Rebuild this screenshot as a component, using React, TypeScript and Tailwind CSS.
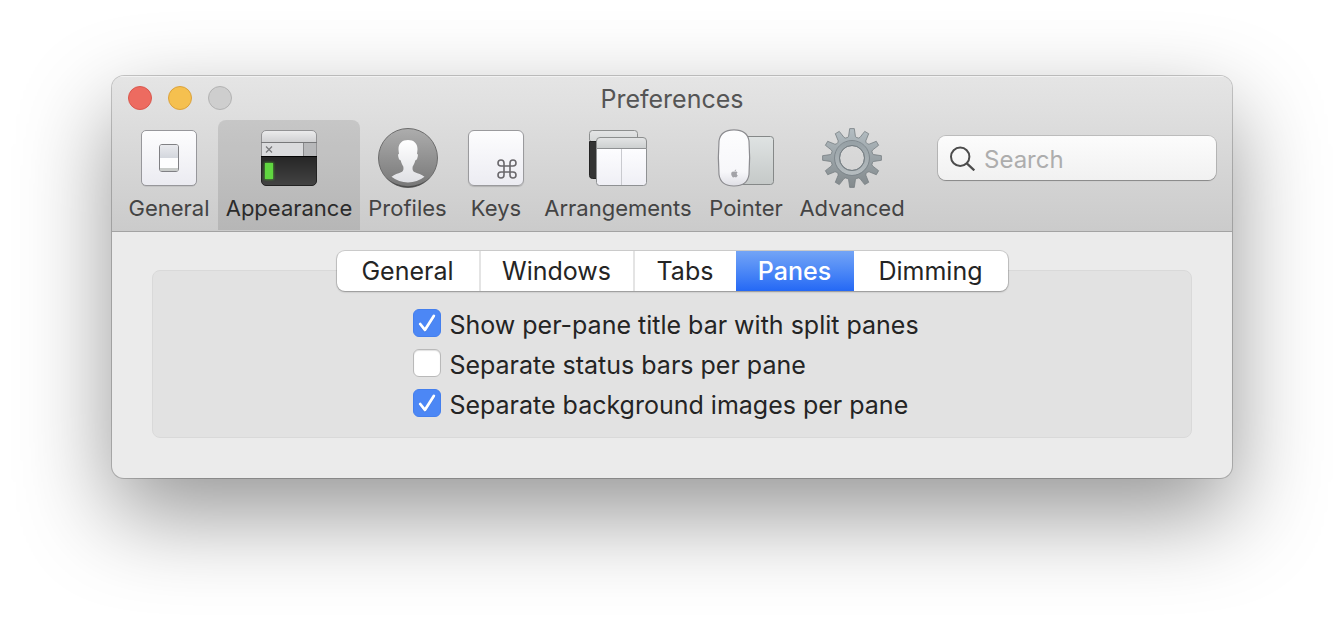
import { useState } from "react";
import type { ReactNode } from "react";
import { FaApple } from "react-icons/fa";
import { Command } from "lucide-react";

function GeneralIcon() {
  return (
    <svg width="60" height="60" viewBox="0 0 60 60" aria-hidden="true">
      <defs>
        <linearGradient id="plate" x1="0" y1="0" x2="0" y2="1">
          <stop offset="0" stopColor="#fdfdfe" />
          <stop offset="1" stopColor="#ebebf1" />
        </linearGradient>
        <linearGradient id="rocker" x1="0" y1="0" x2="0" y2="1">
          <stop offset="0" stopColor="#e9eaee" />
          <stop offset="1" stopColor="#d3d6dd" />
        </linearGradient>
      </defs>
      <rect x="2.5" y="3" width="55" height="55.5" rx="4.5" fill="#00000022" />
      <rect x="2.5" y="2.5" width="55" height="55" rx="4.5" fill="url(#plate)" stroke="#97979b" />
      <rect x="20.5" y="16.5" width="19" height="27" rx="2.5" fill="#fdfdfe" stroke="#808084" />
      <path d="M21 19a2 2 0 0 1 2-2h14a2 2 0 0 1 2 2v11H21z" fill="url(#rocker)" />
      <path d="M21 40h18v1.5a1.5 1.5 0 0 1-1.5 1.5h-15a1.5 1.5 0 0 1-1.5-1.5z" fill="#c8cbc9" />
    </svg>
  );
}

function AppearanceIcon() {
  return (
    <svg width="60" height="60" viewBox="0 0 60 60" aria-hidden="true">
      <defs>
        <linearGradient id="bar" x1="0" y1="0" x2="0" y2="1">
          <stop offset="0" stopColor="#ececed" />
          <stop offset="1" stopColor="#cdced0" />
        </linearGradient>
        <linearGradient id="term" x1="0" y1="0" x2="0" y2="1">
          <stop offset="0" stopColor="#262626" />
          <stop offset="1" stopColor="#434343" />
        </linearGradient>
        <filter id="glow" x="-50%" y="-50%" width="200%" height="200%">
          <feGaussianBlur stdDeviation="1.2" />
        </filter>
      </defs>
      <path d="M2.5 15V7a4.5 4.5 0 0 1 4.5-4.5h46a4.5 4.5 0 0 1 4.5 4.5v8z" fill="url(#bar)" stroke="#929294" />
      <path d="M2.5 14.5h55v14h-55z" fill="#dadbdd" stroke="#929294" />
      <path d="M44.5 15h12.5v13h-12.5z" fill="#b7b8ba" />
      <path d="M44.5 15v13" stroke="#88898b" />
      <path d="M2 14.5h56" stroke="#77787a" />
      <path d="M7 18.5l6 6M13 18.5l-6 6" stroke="#77787a" strokeWidth="1.2" />
      <path d="M2.5 28.5h55V53a4.5 4.5 0 0 1-4.5 4.5H7A4.5 4.5 0 0 1 2.5 53z" fill="url(#term)" stroke="#222" />
      <path d="M2 28.5h56" stroke="#050505" />
      <rect x="5.5" y="34.5" width="9" height="17" fill="#4ecb2e" filter="url(#glow)" opacity=".7" />
      <rect x="6" y="35" width="8" height="16" fill="#60d640" />
    </svg>
  );
}

function ProfilesIcon() {
  return (
    <svg width="60" height="60" viewBox="0 0 60 60" aria-hidden="true">
      <defs>
        <linearGradient id="disc" x1="0" y1="0" x2="0" y2="1">
          <stop offset="0" stopColor="#adadad" />
          <stop offset="1" stopColor="#777777" />
        </linearGradient>
        <linearGradient id="bust" x1="0" y1="0" x2="0" y2="1">
          <stop offset="0" stopColor="#ffffff" />
          <stop offset="1" stopColor="#dfe0e4" />
        </linearGradient>
      </defs>
      <circle cx="30" cy="30" r="29.5" fill="url(#disc)" stroke="#6c6c6c" />
      <path d="M7.500 49A29.500 29.500 0 0 0 52.500 49A32 32 0 0 1 7.500 49z" fill="#3c3c3c" opacity=".7" />
      <path
        d="M30 12C24 12 20.300 15.500 20.500 21.500C20.600 23 20.800 24.500 21 25.800C19.700 26 20 28.200 20.700 30.200C21.200 31.600 21.900 32.300 22.700 32.300C23.300 35 24.300 37 25.300 38.600C25.800 41.500 25.300 43.300 23 44.300C20 45.600 16.500 46.300 13.500 48.800A27 27 0 0 0 46.500 48.800C43.500 46.300 40 45.600 37 44.300C34.700 43.300 34.200 41.500 34.700 38.600C35.700 37 36.700 35 37.300 32.300C38.100 32.300 38.800 31.600 39.300 30.200C40 28.200 40.300 26 39 25.800C39.200 24.500 39.400 23 39.500 21.500C39.700 15.500 36 12 30 12z"
        fill="url(#bust)"
      />
    </svg>
  );
}

function KeysIcon() {
  return (
    <span className="flex h-14 w-14 items-end justify-end rounded-md border border-[#9a9a9d] bg-linear-to-b from-[#fdfdfe] to-[#ececf2] pr-1 pb-1 text-[#6a686c] shadow-[0_1px_1px_rgba(0,0,0,0.15)]">
      <Command size={24} strokeWidth={1.6} aria-hidden="true" />
    </span>
  );
}

function ArrangementsIcon() {
  return (
    <svg width="60" height="60" viewBox="0 0 60 60" aria-hidden="true">
      <defs>
        <linearGradient id="head" x1="0" y1="0" x2="0" y2="1">
          <stop offset="0" stopColor="#e4e5e6" />
          <stop offset="1" stopColor="#cccfcf" />
        </linearGradient>
        <linearGradient id="sheet" x1="0" y1="0" x2="0" y2="1">
          <stop offset="0" stopColor="#fdfdff" />
          <stop offset="1" stopColor="#efeff5" />
        </linearGradient>
      </defs>
      <path d="M1.5 12V5.5a3 3 0 0 1 3-3h42a3 3 0 0 1 3 3V20h-40z" fill="url(#head)" stroke="#8c8e8e" />
      <path d="M1.5 13.5H12V50.5H4.5a3 3 0 0 1-3-3z" fill="#343434" stroke="#232323" />
      <path d="M8.5 20.5V13a3.5 3.5 0 0 1 3.5-3.5h43a3.5 3.5 0 0 1 3.5 3.5v7.5z" fill="url(#head)" stroke="#8c8e8e" />
      <path d="M8.5 20.5h50V54.5a3 3 0 0 1-3 3h-44a3 3 0 0 1-3-3z" fill="url(#sheet)" stroke="#8f9193" />
      <path d="M33.5 21v36" stroke="#c9cacf" />
    </svg>
  );
}

function PointerIcon() {
  return (
    <span className="relative block h-[60px] w-[60px]">
      <svg width="60" height="60" viewBox="0 0 60 60" aria-hidden="true">
        <defs>
          <linearGradient id="pad" x1="0" y1="0" x2="0" y2="1">
            <stop offset="0" stopColor="#dfe3e3" />
            <stop offset="1" stopColor="#c5c9c8" />
          </linearGradient>
          <linearGradient id="mouse" x1="0" y1="0" x2="0" y2="1">
            <stop offset="0" stopColor="#fdfdfe" />
            <stop offset=".75" stopColor="#f7f7fa" />
            <stop offset="1" stopColor="#dfdfe5" />
          </linearGradient>
        </defs>
        <rect x="11.5" y="8.5" width="46" height="48" rx="3" fill="url(#pad)" stroke="#858888" />
        <path
          d="M18 1.800C26.500 1.800 32 6 33 13C33.700 22 33.700 37 33 46.500C32 54 26.500 58 18 58C9.500 58 4 54 3 46.500C2.300 37 2.300 22 3 13C4 6 9.500 1.800 18 1.800z"
          fill="url(#mouse)"
          stroke="#8c8c90"
          strokeWidth="1.2"
        />
      </svg>
      <FaApple size={9} className="absolute top-[41px] left-[14px] text-[#a3a3a8]" aria-hidden="true" />
    </span>
  );
}

const GEAR_TEETH = 12;
const gearPath =
  Array.from({ length: GEAR_TEETH }, (_, i) => {
    const axis = (i * 2 * Math.PI) / GEAR_TEETH - Math.PI / 2;
    const at = (r: number, side: number) =>
      `${(30 + r * Math.cos(axis) - side * Math.sin(axis)).toFixed(2)} ${(30 + r * Math.sin(axis) + side * Math.cos(axis)).toFixed(2)}`;
    return `${i === 0 ? "M" : "L"}${at(20.6, -4.2)}L${at(21.8, -3.4)}L${at(29.4, -2.3)}L${at(29.4, 2.3)}L${at(21.8, 3.4)}L${at(20.6, 4.2)}`;
  }).join("") + "ZM30 17.5A12.5 12.5 0 1 0 30 42.5A12.5 12.5 0 1 0 30 17.5Z";

function AdvancedIcon() {
  return (
    <svg width="60" height="60" viewBox="0 0 60 60" aria-hidden="true">
      <defs>
        <linearGradient id="steel" x1="0" y1="0" x2="0" y2="1">
          <stop offset="0" stopColor="#b3bdc2" />
          <stop offset="1" stopColor="#82898c" />
        </linearGradient>
        <linearGradient id="ring" x1="0" y1="0" x2="0" y2="1">
          <stop offset="0" stopColor="#97a1a6" />
          <stop offset="1" stopColor="#b4bbbe" />
        </linearGradient>
      </defs>
      <path d={gearPath} fill="url(#steel)" fillRule="evenodd" stroke="#767e82" strokeWidth=".8" strokeLinejoin="round" />
      <circle cx="30" cy="30" r="15" fill="none" stroke="url(#ring)" strokeWidth="4" />
      <circle cx="30" cy="30" r="17.5" fill="none" stroke="#7c858a" strokeWidth=".9" />
      <circle cx="30" cy="30" r="12.5" fill="none" stroke="#767f84" />
    </svg>
  );
}

type ToolbarItem = { name: string; width: string; icon: ReactNode };

const toolbarItems: ToolbarItem[] = [
  { name: "General", width: "w-[98px]", icon: <GeneralIcon /> },
  { name: "Appearance", width: "w-[142px]", icon: <AppearanceIcon /> },
  { name: "Profiles", width: "w-[95px]", icon: <ProfilesIcon /> },
  { name: "Keys", width: "w-[82px]", icon: <KeysIcon /> },
  { name: "Arrangements", width: "w-[162px]", icon: <ArrangementsIcon /> },
  { name: "Pointer", width: "w-[94px]", icon: <PointerIcon /> },
  { name: "Advanced", width: "w-[118px]", icon: <AdvancedIcon /> },
];

const tabs = [
  { name: "General", width: "w-[144px]" },
  { name: "Windows", width: "w-[154px]" },
  { name: "Tabs", width: "w-[101px]" },
  { name: "Panes", width: "w-[118px]" },
  { name: "Dimming", width: "w-[154px]" },
];

function Option({ id, label, checked }: { id: string; label: string; checked: boolean }) {
  return (
    <div className="flex h-10 gap-2">
      <span className="relative mt-1 flex h-7 w-7">
        <input
          id={id}
          type="checkbox"
          defaultChecked={checked}
          className="peer h-7 w-7 appearance-none rounded-md border border-[#b9b9b9] bg-white shadow-[inset_0_1px_1px_rgba(0,0,0,0.12)] checked:border-[#447fee] checked:bg-[#4c87f5] checked:shadow-none"
        />
        <svg
          className="pointer-events-none absolute inset-0 hidden peer-checked:block"
          width="28"
          height="28"
          viewBox="0 0 28 28"
          fill="none"
          aria-hidden="true"
        >
          <path d="M7.2 15.8L11.900 21.8L20.8 7.8" stroke="#2f62c4" strokeOpacity=".35" strokeWidth="2.8" strokeLinecap="round" strokeLinejoin="round" />
          <path d="M7.2 15L11.900 20.900L20.8 7" stroke="#fff" strokeWidth="2.8" strokeLinecap="round" strokeLinejoin="round" />
        </svg>
      </span>
      <label htmlFor={id} className="whitespace-nowrap text-[25px] leading-10 text-[#242424]">
        {label}
      </label>
    </div>
  );
}

export default function App() {
  const [section, setSection] = useState("Appearance");
  const [tab, setTab] = useState("Panes");

  return (
    <div className="min-h-screen overflow-hidden bg-white px-28 pt-[76px] pb-[148px] font-[Inter,'Liberation_Sans',sans-serif]">
      <main className="overflow-hidden rounded-xl bg-[#ebebeb] shadow-[0_0_0_1px_rgba(0,0,0,0.2),0_36px_92px_rgba(0,0,0,0.42)]">
        <header className="border-b border-[#a3a3a3] bg-linear-to-b from-[#e5e5e5] to-[#cbcbcb] pb-px shadow-[inset_0_1px_0_#f2f2f2]">
          <div className="grid h-11 grid-cols-[1fr_auto_1fr] items-center px-4">
            <div className="flex gap-4">
              <button type="button" aria-label="Close" className="h-6 w-6 rounded-full border border-[#d9584e] bg-[#ed6b60]" />
              <button type="button" aria-label="Minimize" className="h-6 w-6 rounded-full border border-[#dba23c] bg-[#f5c04f]" />
              <button type="button" aria-label="Zoom" disabled className="h-6 w-6 rounded-full border border-[#b2b2b2] bg-[#cecece]" />
            </div>
            <h1 className="pt-0.5 text-[25px] leading-8 text-[#555]">Preferences</h1>
          </div>
          <div className="flex justify-between gap-4 pr-4 pl-2">
            <nav className="flex" aria-label="Preference sections">
              {toolbarItems.map((item) => (
                <button
                  key={item.name}
                  type="button"
                  aria-pressed={section === item.name}
                  onClick={() => setSection(item.name)}
                  className={`${item.width} flex h-[110px] shrink-0 flex-col items-center rounded-t-lg pt-2 text-[22px] leading-8 whitespace-nowrap ${
                    section === item.name ? "bg-black/10 text-[#2b2b2b]" : "text-[#444]"
                  }`}
                >
                  <span className="flex h-[60px] items-center justify-center">{item.icon}</span>
                  <span className="mt-1">{item.name}</span>
                </button>
              ))}
            </nav>
            <label className="mt-4 flex h-11 w-[278px] shrink items-center gap-2 rounded-lg bg-linear-to-b from-[#fcfcfc] to-[#f1f1f1] px-3 shadow-[0_0_0_1px_rgba(0,0,0,0.14),0_1px_1px_rgba(0,0,0,0.25)]">
              <svg width="26" height="26" viewBox="0 0 26 26" fill="none" stroke="#4c4c4c" strokeWidth="2" className="shrink-0" aria-hidden="true">
                <circle cx="10.2" cy="11.8" r="9.2" />
                <path d="M16.8 18.4L24.3 25.4" strokeWidth="2.2" />
              </svg>
              <input
                type="search"
                aria-label="Search"
                placeholder="Search"
                className="w-full min-w-0 bg-transparent pt-1 text-[24px] leading-8 text-[#333] outline-none placeholder:text-[#adadad]"
              />
            </label>
          </div>
        </header>
        <div className="px-10 pt-[38px] pb-10">
          <section className="flex flex-col items-center rounded-lg border border-[#d9d9d9] bg-[#e2e2e2] pb-3">
            <div
              role="tablist"
              aria-label="Appearance settings"
              className="-mt-5 flex h-10 overflow-hidden rounded-lg bg-white shadow-[0_0_0_1px_rgba(0,0,0,0.13),0_1px_2px_rgba(0,0,0,0.25)]"
            >
              {tabs.map((item) => (
                <button
                  key={item.name}
                  type="button"
                  role="tab"
                  aria-selected={tab === item.name}
                  onClick={() => setTab(item.name)}
                  className={`${item.width} text-[25px] leading-8 ${
                    tab === item.name
                      ? "bg-linear-to-b from-[#73a4f6] to-[#2468f5] font-medium text-white"
                      : "border-r-2 border-[#e4e4e4] text-[#242424] last:border-r-0 has-[+[aria-selected=true]]:border-r-0"
                  }`}
                >
                  {item.name}
                </button>
              ))}
            </div>
            <div className="mt-[14px] flex flex-col pr-3">
              <Option id="pane-title" label="Show per-pane title bar with split panes" checked />
              <Option id="pane-status" label="Separate status bars per pane" checked={false} />
              <Option id="pane-background" label="Separate background images per pane" checked />
            </div>
          </section>
        </div>
      </main>
    </div>
  );
}
